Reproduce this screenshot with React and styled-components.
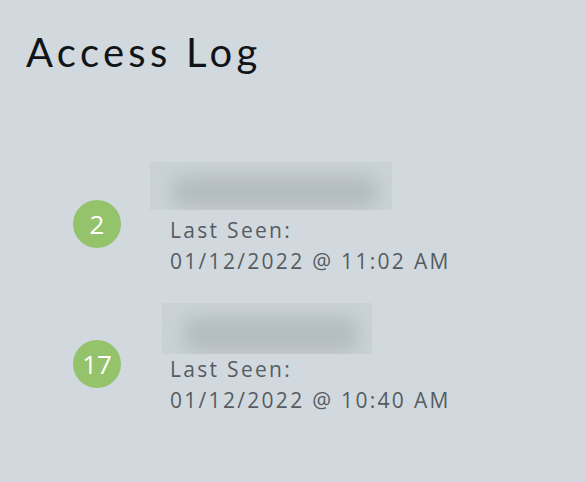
import React from "react";
import styled, { createGlobalStyle } from "styled-components";

const GlobalStyle = createGlobalStyle`
  html, body { margin: 0; padding: 0; background: #d1d9df; }
  body { font-family: "Open Sans", "Liberation Sans", sans-serif; }
`;

const Page = styled.main`
  width: 586px;
  height: 482px;
  box-sizing: border-box;
  padding: 28px 0 0 26px;
  background: #d1d9df;
  overflow: hidden;
`;

const Title = styled.h1`
  margin: 0;
  font-family: "Lato", "Noto Sans", sans-serif;
  font-weight: 400;
  font-size: 40px;
  line-height: 48px;
  letter-spacing: 4.3px;
  color: #111417;
`;

const List = styled.ul`
  list-style: none;
  margin: 86px 0 0 47px;
  padding: 0;
  display: flex;
  flex-direction: column;
  gap: 26px;
`;

const Row = styled.li`
  display: flex;
  align-items: center;
  gap: 49px;
`;

const Badge = styled.span`
  flex: none;
  width: 48px;
  height: 48px;
  margin-top: 8px;
  border-radius: 50%;
  background: #95c36b;
  color: #ffffff;
  display: flex;
  align-items: center;
  justify-content: center;
  font-size: 26px;
  line-height: 1;
`;

const Info = styled.div`
  display: flex;
  flex-direction: column;
`;

const Redacted = styled.div`
  position: relative;
  overflow: hidden;
  width: ${(p) => p.$w}px;
  height: ${(p) => p.$h}px;
  margin-left: ${(p) => p.$dx}px;
  margin-bottom: ${(p) => p.$mb}px;
  background: #cad2d7;
`;

const Smudge = styled.div`
  position: absolute;
  left: 22px;
  right: 14px;
  top: 14px;
  bottom: 2px;
  background: #b4bcbf;
  border-radius: 12px;
  filter: blur(9px);
`;

const Line = styled.div`
  font-size: 21px;
  line-height: 31px;
  letter-spacing: 2.3px;
  color: #565c61;
  white-space: nowrap;
`;

const entries = [
  { count: 2, w: 242, h: 48, dx: -20, mb: 5, date: "01/12/2022 @ 11:02 AM" },
  { count: 17, w: 210, h: 51, dx: -8, mb: 0, date: "01/12/2022 @ 10:40 AM" },
];

export default function App() {
  return (
    <Page>
      <GlobalStyle />
      <Title>Access Log</Title>
      <List>
        {entries.map((e) => (
          <Row key={e.count}>
            <Badge>{e.count}</Badge>
            <Info>
              <Redacted $w={e.w} $h={e.h} $dx={e.dx} $mb={e.mb}>
                <Smudge />
              </Redacted>
              <Line>Last Seen:</Line>
              <Line>{e.date}</Line>
            </Info>
          </Row>
        ))}
      </List>
    </Page>
  );
}
